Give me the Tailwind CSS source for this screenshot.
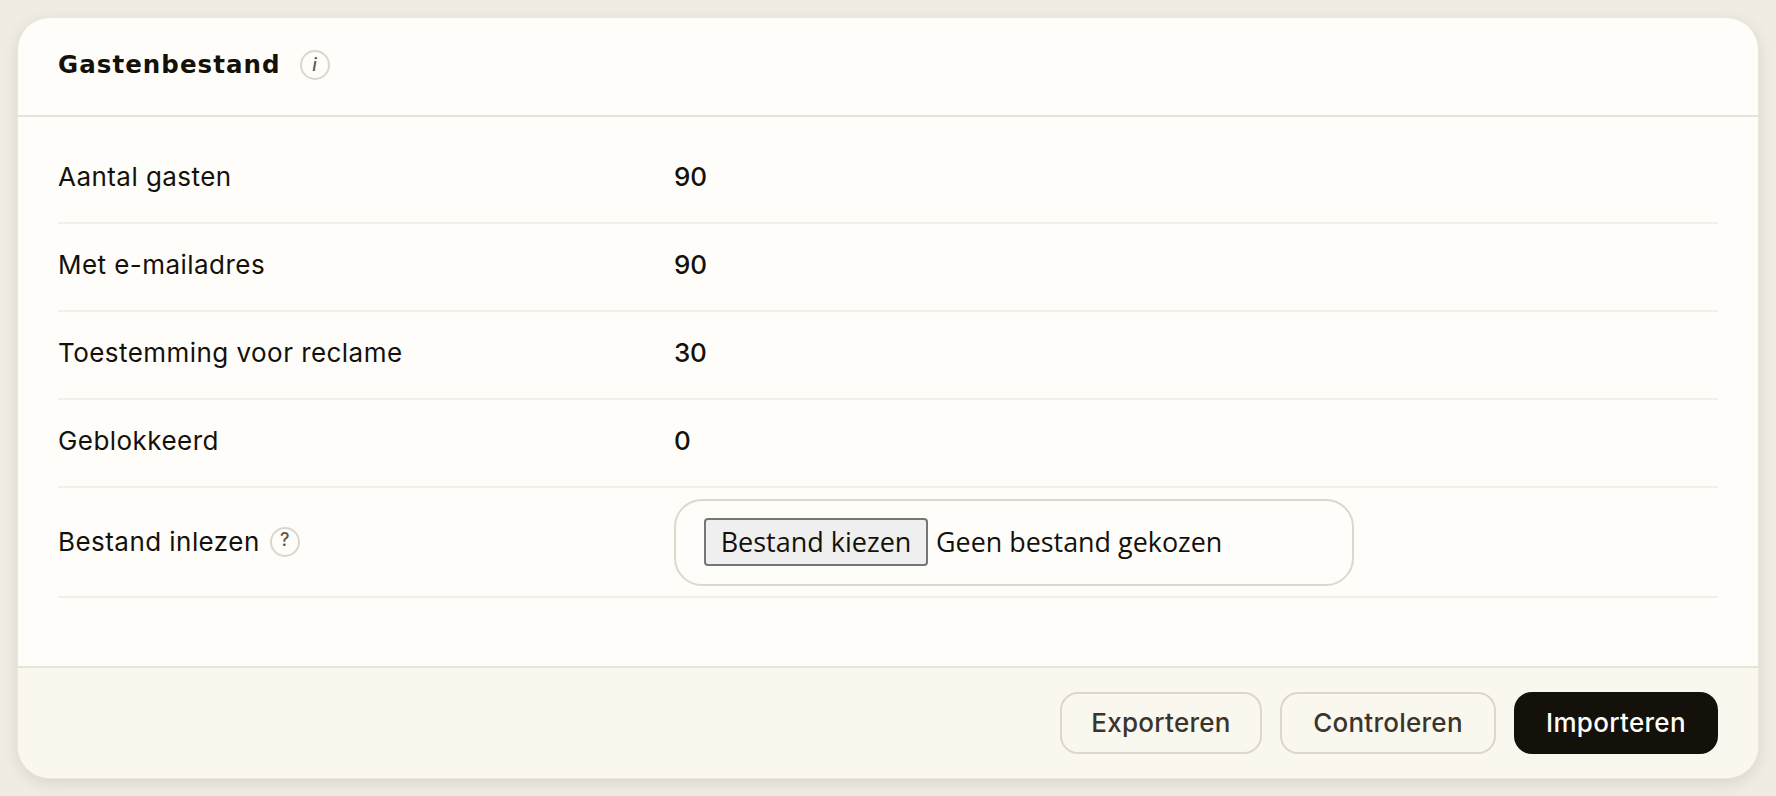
<!DOCTYPE html>
<html lang="nl">
<head>
<meta charset="utf-8">
<script src="https://cdn.jsdelivr.net/npm/@tailwindcss/browser@4"></script>
</head>
<body class="m-0 h-[796px] overflow-hidden bg-[#f0ece2] p-[17px] font-['Inter',sans-serif] text-[#14110b]">
<div class="flex h-[762px] flex-col overflow-hidden rounded-[33px] border border-[#ebe7db] bg-[#fffdf9] shadow-[0_4px_14px_rgba(90,80,50,0.14)]">
  <header class="flex h-[99px] shrink-0 items-center gap-[19px] border-b-2 border-[#e7e3d6] pl-[40px] pb-[3px]">
    <h1 class="font-['DejaVu_Sans',sans-serif] text-[24.5px] leading-none font-bold tracking-[1.05px]">Gastenbestand</h1>
    <span class="flex h-[30px] w-[30px] items-center justify-center rounded-full border-2 border-[#dcd7cb] pb-[2px] font-['Inter',sans-serif] text-[18px] font-medium text-[#5f574c] italic">i</span>
  </header>
  <main class="flex-1 px-[40px] pt-[19px]">
    <div class="flex h-[88px] items-center border-b-2 border-[#f1efe9] pb-[5px]"><span class="w-[616px] text-[26px] tracking-[0.45px]">Aantal gasten</span><span class="text-[26px] font-medium tracking-[-0.2px]">90</span></div>
    <div class="flex h-[88px] items-center border-b-2 border-[#f1efe9] pb-[5px]"><span class="w-[616px] text-[26px] tracking-[0.45px]">Met e-mailadres</span><span class="text-[26px] font-medium tracking-[-0.2px]">90</span></div>
    <div class="flex h-[88px] items-center border-b-2 border-[#f1efe9] pb-[5px]"><span class="w-[616px] text-[26px] tracking-[0.45px]">Toestemming voor reclame</span><span class="text-[26px] font-medium tracking-[-0.2px]">30</span></div>
    <div class="flex h-[88px] items-center border-b-2 border-[#f1efe9] pb-[5px]"><span class="w-[616px] text-[26px] tracking-[0.45px]">Geblokkeerd</span><span class="text-[26px] font-medium tracking-[-0.2px]">0</span></div>
    <div class="flex h-[110px] items-center border-b-2 border-[#f1efe9]">
      <span class="flex w-[616px] items-center gap-[10px] text-[26px] tracking-[0.45px]"><span class="-translate-y-px">Bestand inlezen</span>
        <span class="flex h-[30px] w-[30px] items-center justify-center rounded-full border-2 border-[#dcd7cb] pb-[5px] text-[18px] font-medium tracking-normal text-[#5f574c]">?</span>
      </span>
      <div class="flex h-[87px] w-[680px] items-center rounded-[28px] border-2 border-[#ddd8cb] pl-[28px] font-['Open_Sans',sans-serif] text-[26.9px]">
        <button class="flex h-[48px] w-[224px] items-center justify-center rounded-[4px] border-2 border-[#767676] bg-[#efefef] text-[27px]">Bestand kiezen</button>
        <span class="ml-[8px]">Geen bestand gekozen</span>
      </div>
    </div>
  </main>
  <footer class="flex h-[112px] shrink-0 items-center justify-end gap-[18px] border-t-2 border-[#e7e3d6] bg-[#faf7ef] px-[40px] pb-[1px]">
    <button class="h-[62px] w-[202px] rounded-[18px] border-2 border-[#dcd7cb] text-[26px] font-medium tracking-[0.25px] text-[#3a352c]">Exporteren</button>
    <button class="h-[62px] w-[216px] rounded-[18px] border-2 border-[#dcd7cb] text-[26px] font-medium tracking-[0.25px] text-[#3a352c]">Controleren</button>
    <button class="h-[62px] w-[204px] rounded-[18px] bg-[#14110b] text-[26px] font-medium tracking-[0.3px] text-[#fffdf9]">Importeren</button>
  </footer>
</div>
</body>
</html>
